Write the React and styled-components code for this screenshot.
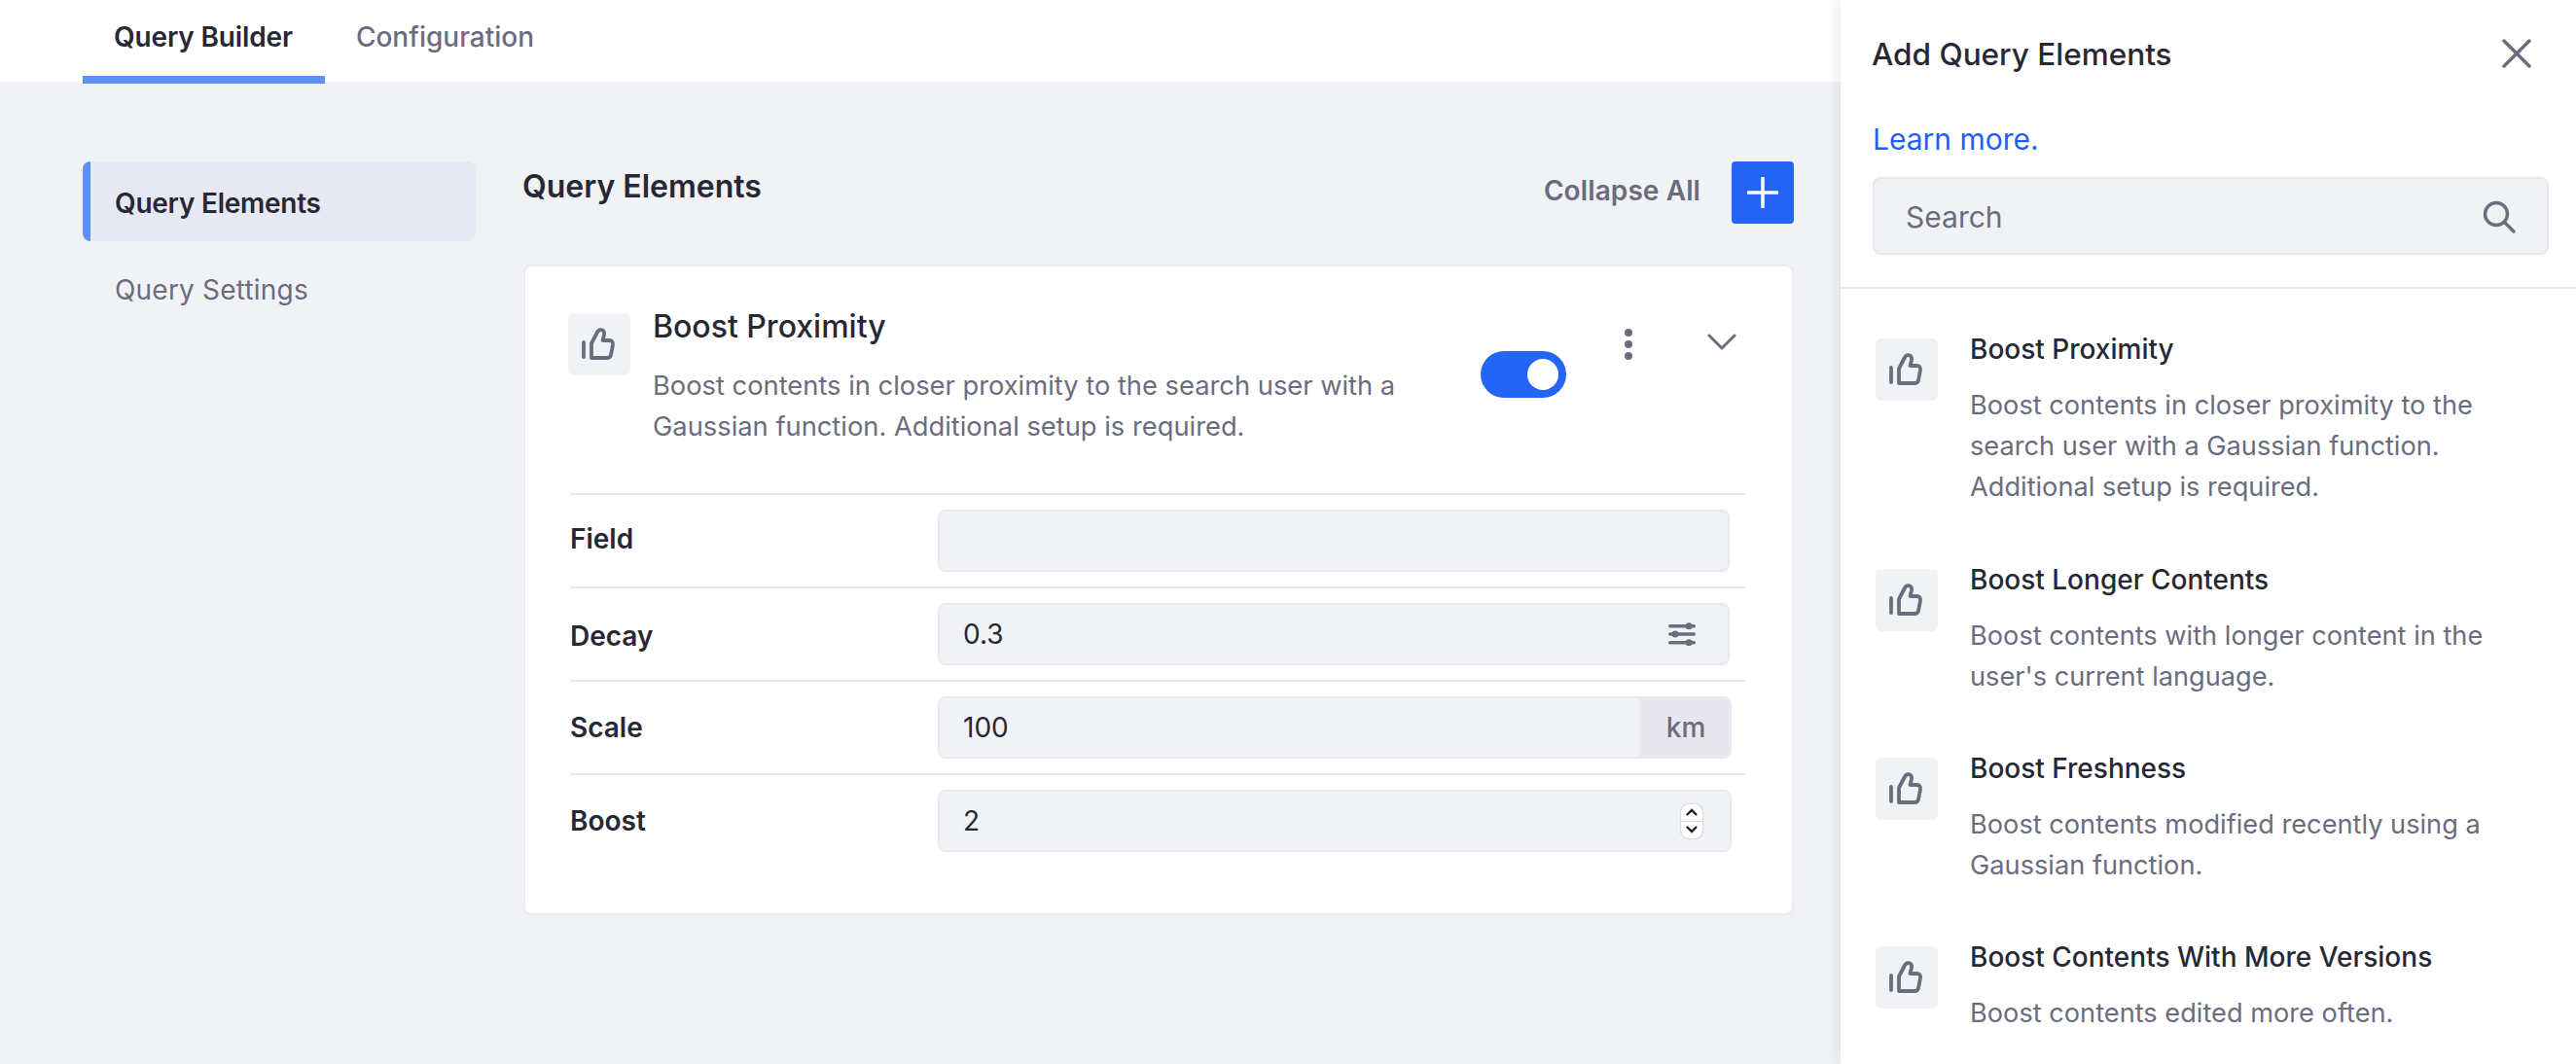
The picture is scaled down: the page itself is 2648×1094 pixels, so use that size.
import React from 'react'
import styled, { createGlobalStyle } from 'styled-components'

const GlobalStyle = createGlobalStyle`
  html, body {
    margin: 0;
    padding: 0;
    background: #f1f2f5;
    font-family: Inter, "Liberation Sans", sans-serif;
    color: #272833;
  }
  * { box-sizing: border-box; }
`

const ThumbIcon = () => (
  <svg width="36" height="36" viewBox="0 0 36 36" fill="none" stroke="#6b6c7e" strokeWidth="3.800" strokeLinecap="round" strokeLinejoin="round">
    <path d="M2 16v15" />
    <path d="M10 32V17L15.500 6.500C16.500 4 18 3 20 3.200 22.500 3.500 23.500 5.500 23 8L21.500 14H28.500C31 14 32.500 16 32 18.500L30 29C29.500 31 28 32 26 32Z" />
  </svg>
)

const Page = styled.div`
  display: flex;
  width: 2648px;
  height: 1094px;
  overflow: hidden;
`

const Main = styled.div`
  width: 1892px;
  flex-shrink: 0;
`

const TabBar = styled.div`
  height: 84px;
  background: #fff;
  padding-left: 85px;
  display: flex;
  align-items: flex-start;
`

const Tab = styled.div`
  height: 86px;
  padding: 20px 33px 0 32px;
  font-size: 28px;
  line-height: 36px;
  font-weight: ${(p) => (p.$active ? 600 : 500)};
  letter-spacing: ${(p) => (p.$active ? '-0.15px' : '0')};
  color: ${(p) => (p.$active ? '#272833' : '#6b6c7e')};
  border-bottom: 8px solid ${(p) => (p.$active ? '#5c8ff8' : 'transparent')};
`

const Content = styled.div`
  display: flex;
  padding: 82px 48px 0 85px;
  position: relative;
`

const Sidebar = styled.div`
  width: 404px;
  margin-right: 49px;
  flex-shrink: 0;
`

const SideItem = styled.div`
  height: 82px;
  margin-bottom: 9px;
  display: flex;
  align-items: center;
  padding-left: ${(p) => (p.$active ? '25px' : '33px')};
  padding-top: ${(p) => (p.$active ? '3px' : '0')};
  font-size: 28px;
  font-weight: ${(p) => (p.$active ? 600 : 400)};
  letter-spacing: ${(p) => (p.$active ? '-0.25px' : '0.2px')};
  color: ${(p) => (p.$active ? '#272833' : '#6b6c7e')};
  background: ${(p) => (p.$active ? '#e6e9f4' : 'transparent')};
  border-left: ${(p) => (p.$active ? '8px solid #5c8ff8' : 'none')};
  border-radius: 8px;
`

const Column = styled.div`
  flex: 1;
  min-width: 0;
`

const ColumnHeader = styled.div`
  height: 106px;
  display: flex;
  align-items: flex-start;
  justify-content: space-between;
`

const ColumnTitle = styled.h2`
  margin: 6px 0 0 -1px;
  font-size: 32px;
  line-height: 40px;
  font-weight: 600;
`

const HeaderActions = styled.div`
  display: flex;
  align-items: center;
  gap: 32px;
  height: 64px;
`

const CollapseAll = styled.span`
  font-size: 28px;
  font-weight: 600;
  letter-spacing: 0.1px;
  color: #6b6c7e;
  margin-top: -4px;
`

const AddButton = styled.div`
  width: 64px;
  height: 64px;
  border-radius: 4px;
  background: #2565f6;
  display: flex;
  align-items: center;
  justify-content: center;
`

const Card = styled.div`
  height: 669px;
  background: #fff;
  border: 2px solid #eaeaef;
  border-radius: 8px;
  padding: 48px 48px 0 44px;
`

const CardTop = styled.div`
  display: flex;
  height: 185px;
`

const IconBox = styled.div`
  width: 64px;
  height: 64px;
  flex-shrink: 0;
  background: #f1f2f5;
  border-radius: 6px;
  display: flex;
  align-items: center;
  justify-content: center;
`

const CardText = styled.div`
  margin-left: 23px;
  width: 813px;
`

const CardTitle = styled.div`
  font-size: 32px;
  line-height: 40px;
  font-weight: 500;
  margin-top: -6px;
`

const CardDesc = styled.div`
  font-size: 27.3px;
  line-height: 42px;
  color: #6b6c7e;
  margin-top: 20px;
`

const Toggle = styled.div`
  width: 88px;
  height: 48px;
  border-radius: 24px;
  background: #2565f6;
  margin: 39px 0 0 38px;
  display: flex;
  align-items: center;
  justify-content: flex-end;
  padding-right: 8px;
`

const Knob = styled.div`
  width: 32px;
  height: 32px;
  border-radius: 50%;
  background: #fff;
`

const DotsWrap = styled.div`
  margin: 16px 0 0 60px;
  width: 8px;
`

const ChevronWrap = styled.div`
  margin: 21px 0 0 77px;
`

const FieldRow = styled.div`
  display: flex;
  align-items: center;
  height: 96px;
  width: 1208px;
  margin-left: 2px;
  border-top: 2px solid #e7e7ed;
`

const FieldLabel = styled.div`
  width: 378px;
  font-size: 28px;
  font-weight: 600;
  margin-top: ${(p) => p.$nudge || 0}px;
`

const InputBox = styled.div`
  width: ${(p) => (p.$wide ? '816px' : '814px')};
  height: 64px;
  background: #f1f2f5;
  border: 2px solid #e7e7ed;
  border-radius: 8px;
  display: flex;
  align-items: center;
  justify-content: space-between;
  padding-left: 24px;
  padding-right: ${(p) => p.$pad || 0}px;
  font-size: 28px;
  overflow: hidden;
`

const Unit = styled.div`
  width: 93px;
  height: 64px;
  padding-left: 3px;
  background: #e7e7ed;
  color: #6b6c7e;
  font-weight: 500;
  display: flex;
  align-items: center;
  justify-content: center;
`

const Spinner = styled.div`
  width: 22px;
  height: 35px;
  background: #fff;
  border-radius: 8px;
  box-shadow: 0 0 2px rgba(0, 0, 0, 0.35);
  display: flex;
  flex-direction: column;
`

const SpinnerPart = styled.div`
  flex: 1;
  display: flex;
  align-items: center;
  justify-content: center;
  border-bottom: ${(p) => (p.$top ? '1px solid #d5d5da' : 'none')};
`

const Panel = styled.aside`
  width: 756px;
  height: 1094px;
  flex-shrink: 0;
  background: #fff;
  overflow: hidden;
  box-shadow: -4px 0 12px rgba(39, 40, 51, 0.08);
  position: relative;
`

const PanelHead = styled.div`
  height: 297px;
  padding: 0 28px 0 33px;
  border-bottom: 2px solid #e7e7ed;
`

const PanelTitleRow = styled.div`
  height: 110px;
  display: flex;
  align-items: center;
  justify-content: space-between;
  padding-right: 18px;
`

const PanelTitle = styled.div`
  font-size: 31.5px;
  font-weight: 500;
  margin-left: -1px;
`

const LearnMore = styled.a`
  display: block;
  font-size: 30px;
  line-height: 40px;
  color: #1f5ff5;
  margin-top: 13px;
`

const SearchBox = styled.div`
  margin-top: 19px;
  height: 80px;
  background: #f1f2f5;
  border: 2px solid #e7e7ed;
  border-radius: 8px;
  display: flex;
  align-items: center;
  justify-content: space-between;
  padding: 2px 32px 0;
  font-size: 30px;
  color: #6b6c7e;
`

const ItemList = styled.div`
  padding: 51px 0 0 36px;
`

const Item = styled.div`
  display: flex;
  height: ${(p) => p.$h}px;
`

const ItemText = styled.div`
  margin-left: 33px;
  width: 580px;
`

const ItemTitle = styled.div`
  font-size: 28px;
  line-height: 34px;
  font-weight: 500;
  margin-top: -6px;
`

const ItemDesc = styled.div`
  font-size: 27.2px;
  line-height: 42px;
  color: #6b6c7e;
  margin-top: 20px;
`

const ITEMS = [
  {
    title: 'Boost Proximity',
    desc: ['Boost contents in closer proximity to the', 'search user with a Gaussian function.', 'Additional setup is required.'],
    h: 237,
  },
  {
    title: 'Boost Longer Contents',
    desc: ['Boost contents with longer content in the', "user's current language."],
    h: 194,
  },
  {
    title: 'Boost Freshness',
    desc: ['Boost contents modified recently using a', 'Gaussian function.'],
    h: 194,
  },
  {
    title: 'Boost Contents With More Versions',
    desc: ['Boost contents edited more often.'],
    h: 150,
  },
]

const App = () => {
  return (
    <>
      <GlobalStyle />
      <Page>
        <Main>
          <TabBar>
            <Tab $active>Query Builder</Tab>
            <Tab>Configuration</Tab>
          </TabBar>
          <Content>
            <Sidebar>
              <SideItem $active>Query Elements</SideItem>
              <SideItem>Query Settings</SideItem>
            </Sidebar>
            <Column>
              <ColumnHeader>
                <ColumnTitle>Query Elements</ColumnTitle>
                <HeaderActions>
                  <CollapseAll>Collapse All</CollapseAll>
                  <AddButton>
                    <svg width="32" height="32" viewBox="0 0 32 32" stroke="#fff" strokeWidth="3.500" strokeLinecap="round">
                      <path d="M16 1v30M1 16h30" />
                    </svg>
                  </AddButton>
                </HeaderActions>
              </ColumnHeader>
              <Card>
                <CardTop>
                  <IconBox><ThumbIcon /></IconBox>
                  <CardText>
                    <CardTitle>Boost Proximity</CardTitle>
                    <CardDesc>
                      Boost contents in closer proximity to the search user with a<br />
                      Gaussian function. Additional setup is required.
                    </CardDesc>
                  </CardText>
                  <Toggle><Knob /></Toggle>
                  <DotsWrap>
                    <svg width="8" height="32" viewBox="0 0 8 32" fill="#6b6c7e">
                      <circle cx="4" cy="4" r="4" />
                      <circle cx="4" cy="16" r="4" />
                      <circle cx="4" cy="28" r="4" />
                    </svg>
                  </DotsWrap>
                  <ChevronWrap>
                    <svg width="30" height="18" viewBox="0 0 30 18" fill="none" stroke="#6b6c7e" strokeWidth="3" strokeLinecap="round" strokeLinejoin="round">
                      <path d="M2 2l13 13L28 2" />
                    </svg>
                  </ChevronWrap>
                </CardTop>
                <FieldRow>
                  <FieldLabel $nudge={-5}>Field</FieldLabel>
                  <InputBox />
                </FieldRow>
                <FieldRow>
                  <FieldLabel $nudge={3}>Decay</FieldLabel>
                  <InputBox $pad={32}>
                    0.3
                    <svg width="30" height="24" viewBox="0 0 30 24" fill="#6b6c7e">
                      <rect x="1" y="2" width="28" height="3.500" rx="1.750" />
                      <rect x="1" y="10.250" width="28" height="3.500" rx="1.750" />
                      <rect x="1" y="19" width="28" height="3.500" rx="1.750" />
                      <circle cx="22" cy="3.750" r="3.500" />
                      <circle cx="8" cy="12" r="3.500" />
                      <circle cx="22" cy="20.750" r="3.500" />
                    </svg>
                  </InputBox>
                </FieldRow>
                <FieldRow>
                  <FieldLabel>Scale</FieldLabel>
                  <InputBox $wide>
                    100
                    <Unit>km</Unit>
                  </InputBox>
                </FieldRow>
                <FieldRow>
                  <FieldLabel>Boost</FieldLabel>
                  <InputBox $wide $pad={28}>
                    2
                    <Spinner>
                      <SpinnerPart $top>
                        <svg width="12" height="8" viewBox="0 0 12 8" fill="none" stroke="#222" strokeWidth="2.400">
                          <path d="M1 7l5-5 5 5" />
                        </svg>
                      </SpinnerPart>
                      <SpinnerPart>
                        <svg width="12" height="8" viewBox="0 0 12 8" fill="none" stroke="#222" strokeWidth="2.400">
                          <path d="M1 1l5 5 5-5" />
                        </svg>
                      </SpinnerPart>
                    </Spinner>
                  </InputBox>
                </FieldRow>
              </Card>
            </Column>
          </Content>
        </Main>
        <Panel>
          <PanelHead>
            <PanelTitleRow>
              <PanelTitle>Add Query Elements</PanelTitle>
              <svg width="30" height="30" viewBox="0 0 30 30" stroke="#6b6c7e" strokeWidth="3.500" strokeLinecap="round">
                <path d="M2 2l26 26M28 2L2 28" />
              </svg>
            </PanelTitleRow>
            <LearnMore>Learn more.</LearnMore>
            <SearchBox>
              Search
              <svg width="34" height="34" viewBox="0 0 34 34" fill="none" stroke="#6b6c7e" strokeWidth="3.400" strokeLinecap="round">
                <circle cx="14" cy="14" r="11.500" />
                <path d="M23 23l9 9" />
              </svg>
            </SearchBox>
          </PanelHead>
          <ItemList>
            {ITEMS.map((item) => (
              <Item key={item.title} $h={item.h}>
                <IconBox><ThumbIcon /></IconBox>
                <ItemText>
                  <ItemTitle>{item.title}</ItemTitle>
                  <ItemDesc>
                    {item.desc.map((line) => (
                      <div key={line}>{line}</div>
                    ))}
                  </ItemDesc>
                </ItemText>
              </Item>
            ))}
          </ItemList>
        </Panel>
      </Page>
    </>
  )
}

export default App
